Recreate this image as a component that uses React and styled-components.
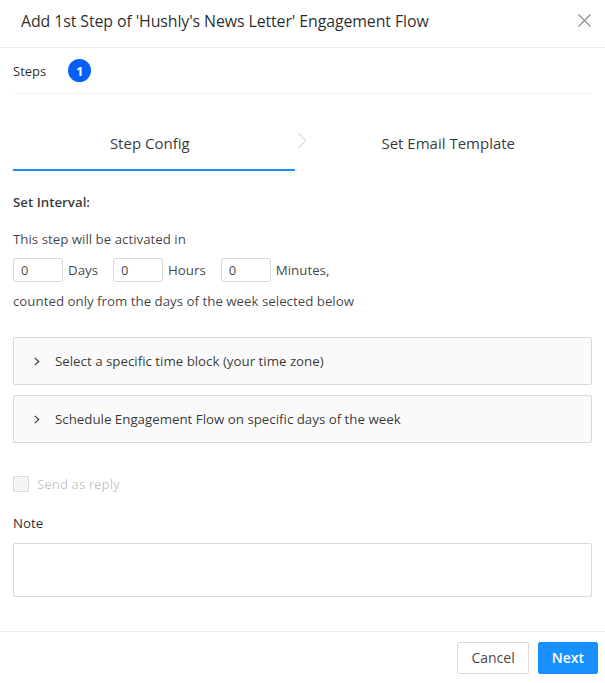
import React from "react";
import styled, { createGlobalStyle } from "styled-components";

const Global = createGlobalStyle`
  html, body { margin: 0; padding: 0; background: #fff; }
  body { font-family: "Open Sans", "Noto Sans", sans-serif; color: rgba(0,0,0,0.85); }
  * { box-sizing: border-box; }
`;

const Modal = styled.div`
  width: 605px;
  height: 683px;
  display: flex;
  flex-direction: column;
  background: #fff;
`;

const Header = styled.div`
  height: 48px;
  display: flex;
  align-items: center;
  justify-content: space-between;
  padding: 0 14px 6px 21px;
  border-bottom: 1px solid #ececec;
`;

const Title = styled.div`
  font-size: 15.9px;
  font-weight: 500;
  color: rgba(0,0,0,0.85);
  letter-spacing: -0.1px;
`;

const Close = styled.button`
  border: none;
  background: none;
  padding: 0;
  width: 14px;
  height: 14px;
  display: flex;
  align-items: center;
  justify-content: center;
  cursor: pointer;
`;

const Body = styled.div`
  flex: 1;
  padding: 0 13px;
  display: flex;
  flex-direction: column;
`;

const StepsRow = styled.div`
  height: 46px;
  display: flex;
  align-items: center;
  gap: 22px;
  border-bottom: 1px solid #f0f0f0;
  font-size: 13px;
`;

const Badge = styled.span`
  width: 23px;
  height: 23px;
  border-radius: 50%;
  background: #0560f7;
  color: #fff;
  font-size: 13px;
  font-weight: 700;
  display: inline-flex;
  align-items: center;
  justify-content: center;
`;

const Tabs = styled.div`
  margin-top: 28px;
  display: flex;
  align-items: stretch;
`;

const Tab = styled.div`
  width: ${p => p.$w}px;
  height: 49px;
  display: flex;
  align-items: center;
  justify-content: center;
  font-size: 15px;
  color: rgba(0,0,0,0.8);
  border-bottom: 2px solid ${p => (p.$active ? "#1890ff" : "transparent")};
  padding: 0 ${p => p.$pr || 0}px 5px 0;
`;

const TabArrow = styled.div`
  width: 14px;
  display: flex;
  align-items: flex-start;
  padding: 10px 0 0 2px;
`;

const SectionTitle = styled.div`
  margin-top: 22px;
  font-size: 13.3px;
  font-weight: 600;
  color: rgba(0,0,0,0.8);
`;

const Text = styled.div`
  font-size: 13.3px;
  color: rgba(0,0,0,0.75);
  margin-top: ${p => p.$mt || 0}px;
`;

const IntervalRow = styled.div`
  margin-top: 10px;
  display: flex;
  align-items: center;
  font-size: 13.3px;
  color: rgba(0,0,0,0.75);
`;

const NumInput = styled.input`
  width: 50px;
  height: 24px;
  border: 1px solid #d9d9d9;
  border-radius: 2px;
  padding: 0 7px;
  font-family: inherit;
  font-size: 13px;
  color: rgba(0,0,0,0.75);
  margin-right: 5px;
`;

const Unit = styled.span`
  margin-right: ${p => p.$mr}px;
`;

const Panels = styled.div`
  margin-top: 27px;
  display: flex;
  flex-direction: column;
  gap: 10px;
`;

const Panel = styled.div`
  height: 48px;
  background: #fafafa;
  border: 1px solid #d9d9d9;
  border-radius: 2px;
  display: flex;
  align-items: center;
  padding-left: 20px;
  gap: 15px;
  font-size: 13.3px;
  color: rgba(0,0,0,0.8);
`;

const CheckRow = styled.label`
  margin-top: 32px;
  display: flex;
  align-items: center;
  gap: 8px;
  font-size: 13.3px;
  color: rgba(0,0,0,0.25);
`;

const CheckBox = styled.span`
  width: 16px;
  height: 16px;
  border: 1px solid #d9d9d9;
  background: #f5f5f5;
  border-radius: 2px;
`;

const NoteLabel = styled.div`
  margin-top: 21px;
  font-size: 13.3px;
  color: rgba(0,0,0,0.85);
`;

const NoteArea = styled.textarea`
  margin-top: 11px;
  height: 54px;
  width: 100%;
  border: 1px solid #d9d9d9;
  border-radius: 2px;
  resize: none;
  font-family: inherit;
`;

const Footer = styled.div`
  height: 52px;
  border-top: 1px solid #ececec;
  display: flex;
  align-items: center;
  justify-content: flex-end;
  gap: 9px;
  padding: 0 7px 0 0;
`;

const Button = styled.button`
  height: 32px;
  padding: 0 ${p => p.$px}px;
  border-radius: 2px;
  font-family: inherit;
  font-size: 14px;
  border: 1px solid ${p => (p.$primary ? "#1890ff" : "#d9d9d9")};
  background: ${p => (p.$primary ? "#1890ff" : "#fff")};
  color: ${p => (p.$primary ? "#fff" : "rgba(0,0,0,0.75)")};
  font-weight: ${p => (p.$primary ? 600 : 400)};
`;

const Chevron = () => (
  <svg width="6" height="9" viewBox="0 0 6 9" fill="none">
    <path d="M0.8 0.8l4 3.7-4 3.7" stroke="#333" strokeWidth="1.1" />
  </svg>
);

export default function App() {
  return (
    <Modal>
      <Global />
      <Header>
        <Title>Add 1st Step of 'Hushly's News Letter' Engagement Flow</Title>
        <Close aria-label="close">
          <svg width="13" height="13" viewBox="0 0 13 13">
            <path d="M0.5 0.5l12 12M12.5 0.5l-12 12" stroke="#8c8c8c" strokeWidth="1.2" />
          </svg>
        </Close>
      </Header>
      <Body>
        <StepsRow>
          <span>Steps</span>
          <Badge>1</Badge>
        </StepsRow>
        <Tabs>
          <Tab $w={282} $pr={8} $active>Step Config</Tab>
          <TabArrow>
            <svg width="10" height="17" viewBox="0 0 10 17">
              <path d="M1.5 1l7 7.5-7 7.5" stroke="#c8c8c8" strokeWidth="1" fill="none" />
            </svg>
          </TabArrow>
          <Tab $w={284} $pr={4}>Set Email Template</Tab>
        </Tabs>
        <SectionTitle>Set Interval:</SectionTitle>
        <Text $mt={19}>This step will be activated in</Text>
        <IntervalRow>
          <NumInput defaultValue="0" />
          <Unit $mr={15}>Days</Unit>
          <NumInput defaultValue="0" />
          <Unit $mr={15}>Hours</Unit>
          <NumInput defaultValue="0" />
          <Unit $mr={0}>Minutes,</Unit>
        </IntervalRow>
        <Text $mt={10}>counted only from the days of the week selected below</Text>
        <Panels>
          <Panel>
            <Chevron />
            <span>Select a specific time block (your time zone)</span>
          </Panel>
          <Panel>
            <Chevron />
            <span>Schedule Engagement Flow on specific days of the week</span>
          </Panel>
        </Panels>
        <CheckRow>
          <CheckBox />
          <span>Send as reply</span>
        </CheckRow>
        <NoteLabel>Note</NoteLabel>
        <NoteArea />
      </Body>
      <Footer>
        <Button $px={13}>Cancel</Button>
        <Button $px={13} $primary>Next</Button>
      </Footer>
    </Modal>
  );
}
